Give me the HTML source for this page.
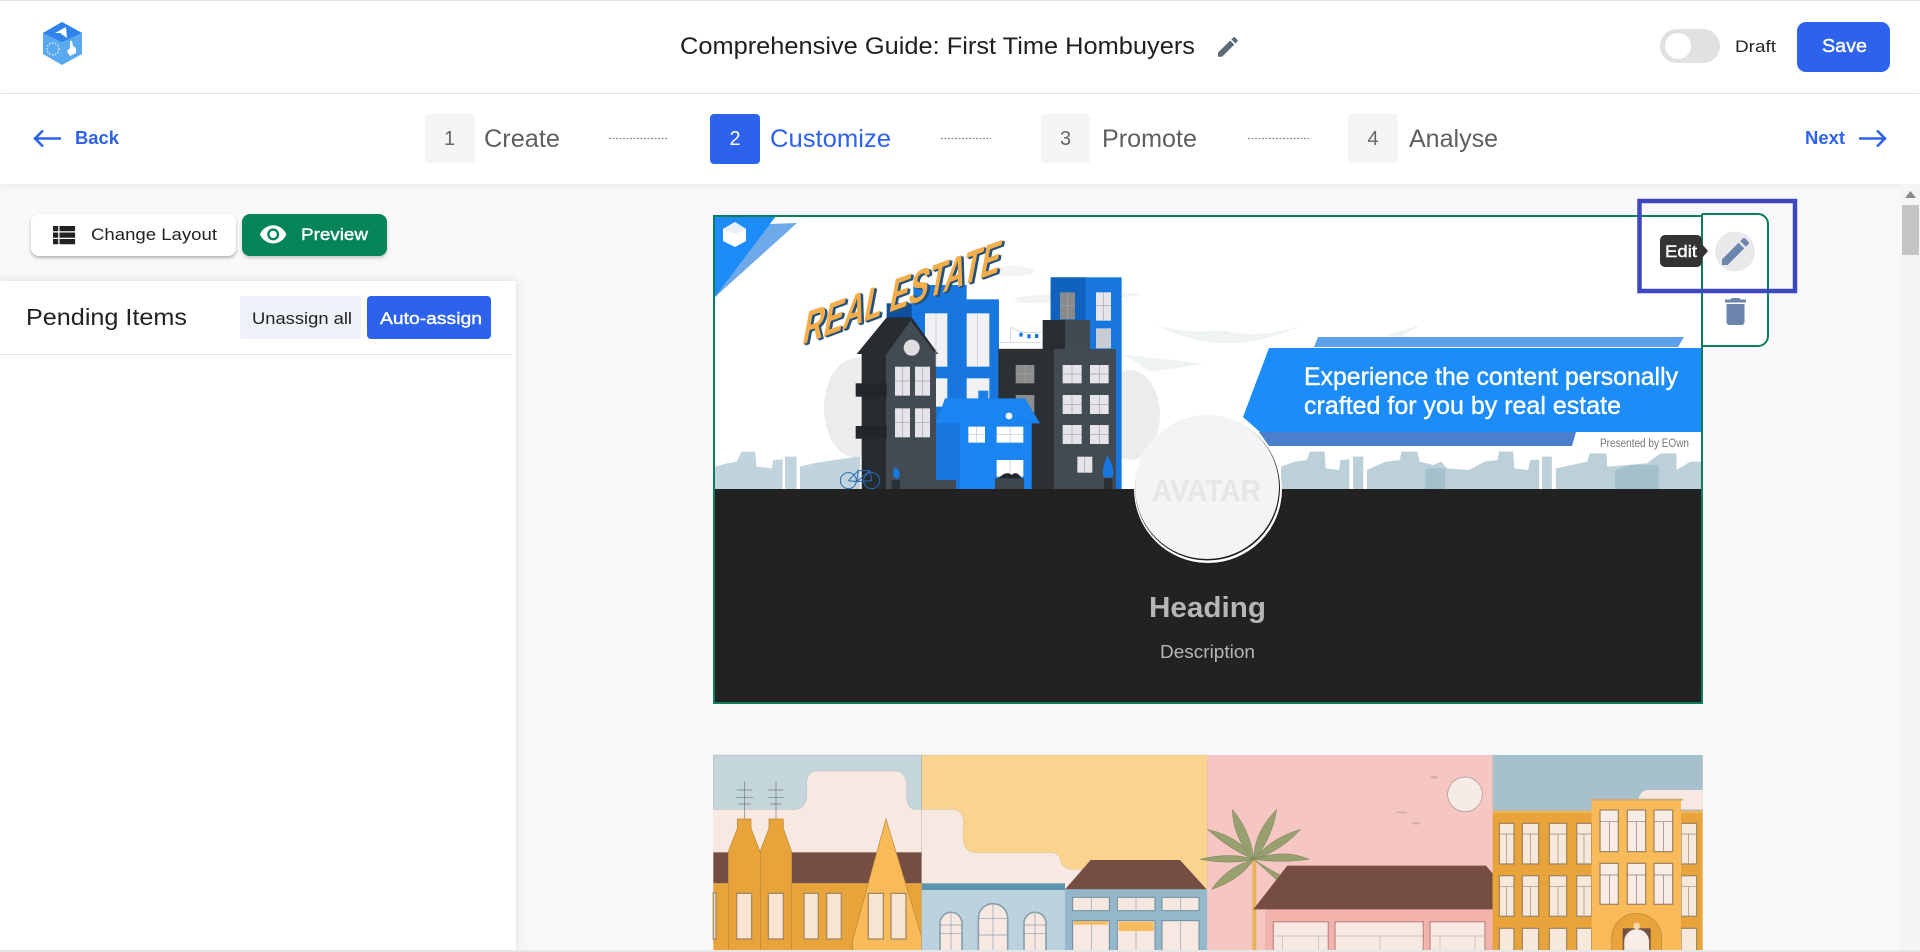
<!DOCTYPE html>
<html lang="en"><head><meta charset="utf-8"><title>Comprehensive Guide</title>
<style>
html,body{margin:0;padding:0;width:1920px;height:952px;overflow:hidden;background:#f8f8fa;font-family:"Liberation Sans",sans-serif}
.a{position:absolute;box-sizing:border-box}
svg{position:absolute;left:0;top:0}
text{font-family:"Liberation Sans",sans-serif}
.m{stroke:#fff;stroke-width:.4px}
</style></head><body>
<div class="a" style="left:0;top:0;width:1920px;height:1px;background:#e2e2e4"></div>
<div class="a" style="left:0;top:1px;width:1920px;height:92px;background:#fff;"></div>
<div class="a" style="left:0;top:93px;width:1920px;height:1px;background:#e3e3e5"></div>
<div class="a" style="left:0;top:94px;width:1920px;height:90px;background:#fff;box-shadow:0 2px 6px rgba(0,0,0,.05)"></div>
<div class="a" style="left:425px;top:114px;width:50px;height:49px;background:#f5f5f6;border-radius:3px"></div>
<div class="a" style="left:710px;top:114px;width:50px;height:50px;background:#2d62ed;border-radius:4px"></div>
<div class="a" style="left:1041px;top:114px;width:49px;height:49px;background:#f5f5f6;border-radius:3px"></div>
<div class="a" style="left:1348px;top:114px;width:50px;height:49px;background:#f5f5f6;border-radius:3px"></div>
<div class="a" style="left:1660px;top:29px;width:60px;height:34px;background:#e1e1e1;border-radius:17px"></div>
<div class="a" style="left:1665px;top:33px;width:26px;height:26px;background:#fff;border-radius:50%"></div>
<div class="a" style="left:1797px;top:22px;width:93px;height:50px;background:#2d62ed;border-radius:9px"></div>
<div class="a" style="left:31px;top:214px;width:205px;height:42px;background:#fff;border-radius:8px;box-shadow:0 2px 3px rgba(0,0,0,.28)"></div>
<div class="a" style="left:242px;top:214px;width:145px;height:42px;background:#048557;border-radius:8px;box-shadow:0 2px 3px rgba(0,0,0,.2)"></div>
<div class="a" style="left:0;top:281px;width:516px;height:671px;background:#fff;box-shadow:0 0 8px rgba(0,0,0,.12)"></div>
<div class="a" style="left:240px;top:296px;width:121px;height:43px;background:#eef1f7;border-radius:3px"></div>
<div class="a" style="left:367px;top:296px;width:124px;height:43px;background:#2d62ed;border-radius:4px"></div>
<div class="a" style="left:0;top:354px;width:512px;height:1px;background:#e3e3e5"></div>
<div class="a" style="left:1901px;top:184px;width:19px;height:768px;background:#f5f5f6"></div>
<div class="a" style="left:1902px;top:205px;width:17px;height:50px;background:#c4c4c4"></div>
<div class="a" style="left:713px;top:215px;width:990px;height:274px;background:#fff"></div>
<div class="a" style="left:713px;top:489px;width:990px;height:215px;background:#222"></div>
<svg width="1920" height="952" viewBox="0 0 1920 952">
<!-- logo -->
<polygon points="62,22 82,33 82,54 62,65 43,54 43,33" fill="#5aa9ee"/>
<polygon points="62,22 82,33 62,42 43,33" fill="#2f83ea"/>
<polygon points="66,27 67,38 60,33 55,33" fill="#fff"/>
<circle cx="53" cy="49" r="6" fill="none" stroke="#cfe6fb" stroke-width="1.500" stroke-dasharray="1.500 1.500"/>
<path d="M70 41h2l1 5 3 2v5l-6 3-3-5 3-3z" fill="#fff"/>
<!-- arrows + pencil -->
<g fill="none" stroke="#2d62ed" stroke-width="2.500"><path d="M35 138.500h26M43 130.500l-8 8 8 8"/><path d="M1859 138.500h26M1877 130.500l8 8-8 8"/></g>
<g fill="#5d6b7a" transform="translate(1214.700,33.700) scale(1.100)"><path d="M3 17.250V21h3.750L17.810 9.940l-3.750-3.750L3 17.250zM20.710 7.040c.39-.39.39-1.020 0-1.410l-2.340-2.340c-.39-.39-1.020-.39-1.410 0l-1.830 1.830 3.750 3.750 1.830-1.830z"/></g>
<g stroke="#8c8c8c" stroke-width="1.200" stroke-dasharray="2 1.500"><path d="M609 138.500h58M941 138.500h50M1248 138.500h61"/></g>
<!-- UI text -->
<text x="680" y="54" font-size="24" fill="#1f1f1f" textLength="515" lengthAdjust="spacingAndGlyphs">Comprehensive Guide: First Time Hombuyers</text>
<text x="1735" y="52" font-size="17" fill="#262626" textLength="41" lengthAdjust="spacingAndGlyphs">Draft</text>
<text class="m" x="1822" y="52" font-size="18" fill="#fff" textLength="45" lengthAdjust="spacingAndGlyphs">Save</text>
<text x="75" y="144" font-size="18" font-weight="700" fill="#2d62ed" textLength="44" lengthAdjust="spacingAndGlyphs">Back</text>
<text x="1805" y="144" font-size="18" font-weight="700" fill="#2d62ed" textLength="40" lengthAdjust="spacingAndGlyphs">Next</text>
<text x="449.500" y="145" font-size="20" fill="#666" text-anchor="middle">1</text>
<text x="735" y="145" font-size="20" fill="#fff" text-anchor="middle">2</text>
<text x="1065.500" y="145" font-size="20" fill="#666" text-anchor="middle">3</text>
<text x="1373" y="145" font-size="20" fill="#666" text-anchor="middle">4</text>
<text x="484" y="147" font-size="25" fill="#5f5f5f" textLength="76" lengthAdjust="spacingAndGlyphs">Create</text>
<text x="770" y="147" font-size="25" fill="#2d62ed" textLength="121" lengthAdjust="spacingAndGlyphs">Customize</text>
<text x="1102" y="147" font-size="25" fill="#5f5f5f" textLength="95" lengthAdjust="spacingAndGlyphs">Promote</text>
<text x="1409" y="147" font-size="25" fill="#5f5f5f" textLength="89" lengthAdjust="spacingAndGlyphs">Analyse</text>
<g fill="#222" transform="translate(47.800,219.500) scale(1.300)"><path d="M4 14h4v-4H4v4zm0 5h4v-4H4v4zM4 9h4V5H4v4zm5 5h12v-4H9v4zm0 5h12v-4H9v4zM9 5v4h12V5H9z"/></g>
<text x="91" y="240" font-size="17" fill="#222" textLength="126" lengthAdjust="spacingAndGlyphs">Change Layout</text>
<g fill="#fff" transform="translate(258.800,220) scale(1.200)"><path d="M12 4.500C7 4.500 2.730 7.610 1 12c1.730 4.390 6 7.500 11 7.500s9.270-3.110 11-7.500c-1.730-4.390-6-7.500-11-7.500zM12 17c-2.760 0-5-2.240-5-5s2.240-5 5-5 5 2.240 5 5-2.240 5-5 5zm0-8c-1.660 0-3 1.340-3 3s1.340 3 3 3 3-1.340 3-3-1.340-3-3-3z"/></g>
<text class="m" x="301" y="240" font-size="17" fill="#fff" textLength="67" lengthAdjust="spacingAndGlyphs">Preview</text>
<text x="26" y="325" font-size="23" fill="#222" textLength="161" lengthAdjust="spacingAndGlyphs">Pending Items</text>
<text x="252" y="324" font-size="17" fill="#222" textLength="100" lengthAdjust="spacingAndGlyphs">Unassign all</text>
<text class="m" x="380" y="324" font-size="17" fill="#fff" textLength="102" lengthAdjust="spacingAndGlyphs">Auto-assign</text>
<polygon points="1905,198 1910.500,191 1916,198" fill="#8a8a8a"/>
<!-- banner background clouds -->
<g fill="#eef4f1"><path d="M1157 325Q1190 335 1222 330Q1260 340 1303 325Q1260 345 1220 343Q1190 342 1157 325z"/><path d="M1123 354L1205 364L1150 372z"/><path d="M1386 335L1421 325L1400 337z"/></g>
<g fill="#f3f3f3"><ellipse cx="1013" cy="271" rx="22" ry="5"/><path d="M1013 298Q1080 288 1143 294L1100 302L1020 303z"/></g>
<g fill="#ececec"><ellipse cx="1130" cy="415" rx="30" ry="45"/><ellipse cx="857" cy="408" rx="33" ry="50"/></g>
<!-- corner -->
<polygon points="715,224 770,224 797,223 715,297" fill="#6ea9ea"/>
<polygon points="715,216 776,216 715,297" fill="#1b8cf8"/>
<polygon points="735,222 746,229 746,241 735,247 723,241 723,229" fill="#fff"/>
<polygon points="735,222 746,229 735,234 723,229" fill="#e6eff9"/>
<!-- buildings, zoom coords -->
<g transform="translate(700,200) scale(.33333)">
<path d="M45 867V800L80 790 110 785 125 755H165L170 800 215 805 220 780 248 778V867H255V770H290V867H300V800L340 790 400 780 480 770V867z" fill="#c1d3dc"/>
<rect x="560" y="310" width="80" height="60" fill="#0e4f9f"/>
<rect x="640" y="255" width="160" height="60" fill="#1877df"/>
<rect x="635" y="298" width="262" height="569" fill="#1877df"/>
<g fill="#f1f0f3"><rect x="675" y="340" width="67" height="160"/><rect x="800" y="340" width="68" height="160"/><rect x="700" y="535" width="42" height="85"/><rect x="800" y="535" width="68" height="65"/></g>
<rect x="1052" y="232" width="213" height="635" fill="#1877df"/>
<rect x="1052" y="232" width="105" height="128" fill="#0f62bd"/>
<rect x="1080" y="277" width="45" height="81" fill="#8a8a8a"/>
<rect x="1188" y="277" width="45" height="85" fill="#e6e6ea"/><rect x="1188" y="385" width="45" height="60" fill="#c9cdd3"/>
<g stroke="#c9c9cc" stroke-width="2" fill="none"><path d="M897 427H1027M897 445H1027M932 382V427M932 382Q970 405 1027 395"/></g>
<g fill="#1877df"><rect x="958" y="398" width="10" height="12"/><rect x="982" y="403" width="10" height="12"/><rect x="1005" y="402" width="10" height="12"/></g>
<rect x="895" y="447" width="170" height="420" fill="#2b3035"/>
<rect x="1028" y="360" width="67" height="90" fill="#282d31"/><rect x="1095" y="360" width="75" height="90" fill="#424a50"/>
<rect x="1062" y="447" width="186" height="420" fill="#424b52"/>
<g fill="#e6e4e8"><rect x="1088" y="495" width="57" height="55"/><rect x="1170" y="495" width="56" height="55"/><rect x="1088" y="585" width="57" height="57"/><rect x="1170" y="585" width="56" height="57"/><rect x="1088" y="675" width="57" height="57"/><rect x="1170" y="675" width="56" height="57"/><rect x="1132" y="770" width="45" height="48"/></g>
<rect x="947" y="495" width="56" height="55" fill="#8d8d8d"/><rect x="947" y="585" width="56" height="55" fill="#8d8d8d"/>
<path d="M1222 767Q1245 800 1238 832H1210Q1205 800 1222 767z" fill="#1877df"/><rect x="1212" y="835" width="25" height="32" fill="#2b3035"/>
<polygon points="470,462 560,352 635,352 715,462" fill="#272c30"/>
<rect x="485" y="462" width="75" height="405" fill="#262b30"/>
<rect x="467" y="550" width="95" height="40" fill="#22262a"/><rect x="467" y="678" width="95" height="38" fill="#22262a"/>
<polygon points="560,462 632,362 708,462" fill="#424b52"/>
<rect x="560" y="462" width="148" height="405" fill="#424b52"/>
<circle cx="635" cy="443" r="24" fill="#dedde0"/>
<g fill="#e6e4e8"><rect x="585" y="500" width="45" height="87"/><rect x="645" y="500" width="45" height="87"/><rect x="585" y="625" width="45" height="87"/><rect x="645" y="625" width="45" height="87"/></g>
<rect x="708" y="840" width="60" height="27" fill="#434b52"/>
<rect x="835" y="572" width="30" height="30" fill="#1a80ea"/>
<polygon points="708,670 735,595 975,595 1020,670" fill="#1a84f0"/>
<rect x="708" y="670" width="287" height="170" fill="#1877df"/>
<rect x="780" y="670" width="215" height="197" fill="#1a84f0"/>
<circle cx="927" cy="648" r="10" fill="#fff"/>
<g fill="#fff"><rect x="805" y="680" width="50" height="48"/><rect x="890" y="680" width="80" height="48"/><rect x="890" y="780" width="80" height="50"/></g>
<g stroke="#9aa6b0" stroke-width="2" fill="none"><path d="M1116 495V550M1088 522H1145M1198 495V550M1170 522H1226M1116 585V642M1088 613H1145M1198 585V642M1170 613H1226M1116 675V732M1088 703H1145M1198 675V732M1170 703H1226M1154 770V818M607 500V587M585 543H630M667 500V587M645 543H690M607 625V712M585 668H630M667 625V712M645 668H690M975 495V550M947 522H1003M1102 277V358M1080 317H1125M1210 277V362M1188 317H1233"/></g>
<g stroke="#b5c5d5" stroke-width="2" fill="none"><path d="M708 340V500M833 340V500M830 680V728M805 704H855M930 680V728M890 704H970M930 780V830"/></g>
<rect x="885" y="835" width="87" height="32" fill="#3d464c"/><path d="M895 835Q920 810 935 825Q950 810 965 835z" fill="#22262a"/>
<g fill="none" stroke="#2a6cb4" stroke-width="3"><circle cx="445" cy="842" r="24"/><circle cx="515" cy="842" r="24"/><path d="M445 842L475 812H510L515 842L470 845L445 842M475 812L470 845L510 812"/></g>
<path d="M585 800Q570 830 592 838Q610 820 585 800z" fill="#1877df"/><rect x="575" y="840" width="25" height="27" fill="#2b3035"/>
</g>
<!-- REAL ESTATE -->
<g transform="matrix(1,-.37,-.19,1,801,345)">
<text x="3" y="2.500" font-size="48" font-weight="700" fill="#24527a" textLength="197" lengthAdjust="spacingAndGlyphs">REAL ESTATE</text>
<text x="1.500" y="1.200" font-size="48" font-weight="700" fill="#24527a" textLength="197" lengthAdjust="spacingAndGlyphs">REAL ESTATE</text>
<text x="0" y="0" font-size="48" font-weight="700" fill="#f3ae4b" textLength="197" lengthAdjust="spacingAndGlyphs">REAL ESTATE</text>
</g>
<!-- right band -->
<polygon points="1314,347 1318,337 1684,337 1678,347" fill="#5ca1e9"/>
<polygon points="1269,348 1701,348 1701,432 1260,432 1243,417" fill="#1b8cf8"/>
<polygon points="1259,432 1576,432 1572,446 1269,446" fill="#4a80cb"/>
<text class="m" x="1304" y="385" font-size="25" fill="#fff" textLength="374" lengthAdjust="spacingAndGlyphs">Experience the content personally</text>
<text class="m" x="1304" y="414" font-size="25" fill="#fff" textLength="317" lengthAdjust="spacingAndGlyphs">crafted for you by real estate</text>
<text x="1600" y="447" font-size="11.500" fill="#777" textLength="89" lengthAdjust="spacingAndGlyphs">Presented by EOwn</text>
<g transform="translate(1200,190) scale(.39541,.33333)">
<path d="M205 897V830L240 815 270 810 278 785H315L318 835 352 840 355 810 378 808V897H387V800H413V897H422V840L470 815 505 810 510 785H550L555 815 590 825 610 815 625 835 680 840 720 815 752 810 756 785H792L795 835 830 840 835 810 858 808V897H865V800H890V897H900V835L980 815 985 790H1028L1030 830 1130 820 1165 790H1205V840L1240 815H1268V897z" fill="#bcd0d9"/>
<path d="M570 897V835H620V897zM1050 897V840L1090 825H1160V897z" fill="#a4c0cc"/>
</g>
<!-- avatar -->
<circle cx="1208" cy="489" r="74" fill="#fff"/>
<circle cx="1207.500" cy="488" r="72.500" fill="#1a1a1a"/>
<circle cx="1207" cy="487" r="72" fill="#f4f4f5"/>
<text x="1206.500" y="501" font-size="31" font-weight="700" fill="#e6e6e7" text-anchor="middle" textLength="109" lengthAdjust="spacingAndGlyphs">AVATAR</text>
<text x="1207.500" y="617" font-size="29" font-weight="700" fill="#b6b6b6" text-anchor="middle" textLength="117" lengthAdjust="spacingAndGlyphs">Heading</text>
<text x="1207.500" y="658" font-size="18" fill="#b6b6b6" text-anchor="middle" textLength="95" lengthAdjust="spacingAndGlyphs">Description</text>
<!-- card border -->
<rect x="714" y="216" width="988" height="487" fill="none" stroke="#0c7d5f" stroke-width="2"/>
<!-- action panel -->
<path d="M1702 214H1758a10 10 0 0 1 10 10V336a10 10 0 0 1-10 10H1702z" fill="#fff"/>
<path d="M1702 214H1758a10 10 0 0 1 10 10V336a10 10 0 0 1-10 10H1702V214" fill="none" stroke="#0c7d5f" stroke-width="2"/>
<rect x="1660" y="235" width="42" height="32" rx="5" fill="#333"/>
<polygon points="1702,244 1708,251 1702,258" fill="#333"/>
<text class="m" x="1665" y="257" font-size="17" fill="#fff" textLength="32" lengthAdjust="spacingAndGlyphs">Edit</text>
<ellipse cx="1735" cy="251.500" rx="20" ry="20" fill="#e9e9ec"/>
<g fill="#6b85ac" transform="translate(1717.500,233.500) scale(1.500)"><path d="M3 17.250V21h3.750L17.810 9.940l-3.750-3.750L3 17.250zM20.710 7.040c.39-.39.39-1.020 0-1.410l-2.340-2.340c-.39-.39-1.020-.39-1.410 0l-1.830 1.830 3.750 3.750 1.830-1.830z"/></g>
<g fill="#6b85ac" transform="translate(1717.500,293.500) scale(1.500)"><path d="M6 19c0 1.100.9 2 2 2h8c1.100 0 2-.9 2-2V7H6v12zM19 4h-3.500l-1-1h-5l-1 1H5v2h14V4z"/></g>
<rect x="1639.500" y="201" width="155.500" height="90" fill="none" stroke="#3d48c0" stroke-width="4.500"/>
<!-- lower image -->
<g transform="translate(700,740) scale(.33333)">
<rect x="40" y="45" width="625" height="590" fill="#f7e8e2"/>
<path d="M40 45H665V208H640Q620 200 620 170V130Q615 93 585 93H350Q320 95 320 125V170Q315 205 290 208H40z" fill="#c5d5dc" stroke="#9aa" stroke-width="1"/>
<rect x="40" y="337" width="625" height="93" fill="#764d42"/>
<rect x="40" y="430" width="625" height="205" fill="#e8a33b"/>
<g stroke="#6f7d80" stroke-width="2" fill="none"><path d="M133 125V237M110 150H157M108 172H160M115 192H152M228 125V237M205 150H250M203 172H253M210 192H245"/></g>
<polygon points="85,335 112,265 112,237 153,237 153,265 180,335 207,265 207,237 250,237 250,265 275,335 275,635 85,635" fill="#e8a33b" stroke="#b98635" stroke-width="2"/>
<path d="M181 335V635" stroke="#b98635" stroke-width="2"/>
<polygon points="558,237 458,600 458,635 665,635 665,590" fill="#f9bb5a" stroke="#b98635" stroke-width="2"/>
<g fill="#f7e4d1" stroke="#a68a62" stroke-width="4"><rect x="40" y="458" width="8" height="139"/><rect x="110" y="460" width="45" height="137"/><rect x="205" y="460" width="45" height="137"/><rect x="312" y="460" width="43" height="137"/><rect x="380" y="460" width="44" height="137"/><rect x="505" y="460" width="45" height="137"/><rect x="573" y="460" width="45" height="137"/></g>
<rect x="665" y="45" width="857" height="590" fill="#f7e8e2"/>
<path d="M665 45H1522V448H1150V388H1110Q1085 385 1080 355Q1075 338 1050 338H825Q795 335 790 305V240Q785 208 755 208H665z" fill="#fad38f" stroke="#bfae8e" stroke-width="1"/>
<rect x="665" y="430" width="430" height="205" fill="#bcd2de"/>
<rect x="665" y="430" width="430" height="20" fill="#5f94b0"/>
<g fill="#f7e8e2" stroke="#8aa0ac" stroke-width="5">
<path d="M720 635V550a33 33 0 0 1 66 0V635z"/><path d="M835 635V535a44 44 0 0 1 88 0V635z"/><path d="M972 635V550a33 33 0 0 1 66 0V635z"/></g>
<g stroke="#8aa0ac" stroke-width="2" fill="none"><path d="M753 520V635M720 580H786M720 555H786M879 490V635M835 535H923M835 585H923M1005 520V635M972 580H1038M972 555H1038M1174 472V512M1308 472V512M1441 472V512M1174 542V635M1308 575V635M1441 542V635"/></g>
<polygon points="1172,360 1440,360 1520,448 1095,448" fill="#764d42"/>
<rect x="1095" y="448" width="427" height="187" fill="#95b7cb"/>
<g fill="#f7e8e2" stroke="#6f8c9c" stroke-width="3"><rect x="1118" y="472" width="110" height="40"/><rect x="1252" y="472" width="113" height="40"/><rect x="1386" y="472" width="111" height="40"/><rect x="1118" y="542" width="110" height="95"/><rect x="1252" y="542" width="113" height="95"/><rect x="1386" y="542" width="111" height="95"/></g>
<rect x="1256" y="545" width="105" height="28" fill="#f5bb5d"/><rect x="1122" y="544" width="102" height="10" fill="#f5bb5d"/>
<g stroke="#8aa0ac" stroke-width="2" fill="none"><path d="M1174 472V512M1308 472V512M1441 472V512M1174 554V635M1308 573V635M1441 545V635"/></g>
<path d="M665 45V630" stroke="#999" stroke-width="1"/>
</g>
<g transform="translate(1200,740) scale(.33333)">
<rect x="22" y="45" width="857" height="590" fill="#f6c6c2"/>
<circle cx="795" cy="163" r="52" fill="#f6ece5" stroke="#a5908c" stroke-width="2"/>
<g fill="#d5aeac"><ellipse cx="702" cy="112" rx="12" ry="5"/><ellipse cx="605" cy="217" rx="18" ry="3"/><ellipse cx="648" cy="250" rx="12" ry="4"/></g>
<rect x="157" y="358" width="12" height="277" fill="#e8b35a"/>
<g fill="#97a06e" stroke="#76805a" stroke-width="1.500"><path d="M162 358Q90 330 22 268Q120 290 162 358z"/><path d="M162 358Q100 300 97 208Q150 270 162 358z"/><path d="M162 358Q160 280 230 208Q215 300 162 358z"/><path d="M162 358Q210 295 302 268Q240 335 162 358z"/><path d="M162 358Q90 335 0 358Q90 375 162 358z"/><path d="M162 358Q250 325 328 358Q240 370 162 358z"/><path d="M162 358Q80 380 35 448Q120 420 162 358z"/><path d="M162 358Q210 390 250 410L230 420z"/></g>
<rect x="195" y="508" width="684" height="127" fill="#f2b3ad"/>
<polygon points="262,377 858,377 878,400 878,508 160,508" fill="#764d42"/>
<g fill="#f6e8e2" stroke="#c98d88" stroke-width="4"><rect x="220" y="545" width="165" height="90"/><rect x="405" y="545" width="265" height="90"/><rect x="690" y="545" width="165" height="90"/></g>
<g stroke="#c9b4ae" stroke-width="2" fill="none"><path d="M222 588H383M407 588H668M692 588H853M248 588V635M355 588V635M540 588V635M720 588V635M825 588V635"/></g>
<rect x="878" y="45" width="630" height="590" fill="#e8a33b"/>
<rect x="878" y="45" width="630" height="167" fill="#a7c0cd"/>
<path d="M1315 178Q1322 150 1345 150H1508V208H1443V178z" fill="#f7e8e2"/>
<rect x="878" y="212" width="630" height="8" fill="#efb455"/>
<g fill="#f7e8dc" stroke="#a68a62" stroke-width="4">
<rect x="898" y="250" width="44" height="122"/><rect x="967" y="250" width="49" height="122"/><rect x="1048" y="250" width="52" height="122"/><rect x="1130" y="250" width="45" height="122"/><rect x="1443" y="250" width="47" height="122"/>
<rect x="898" y="407" width="44" height="122"/><rect x="967" y="407" width="49" height="122"/><rect x="1048" y="407" width="52" height="122"/><rect x="1130" y="407" width="45" height="122"/><rect x="1443" y="407" width="47" height="122"/>
<rect x="898" y="565" width="44" height="70"/><rect x="967" y="565" width="49" height="70"/><rect x="1048" y="565" width="52" height="70"/><rect x="1130" y="565" width="45" height="70"/><rect x="1443" y="565" width="47" height="70"/></g>
<g stroke="#9c8a70" stroke-width="2" fill="none"><path d="M898 282H942M967 282H1016M1048 282H1100M1130 282H1175M1443 282H1490M920 282V372M991 282V372M1074 282V372M1152 282V372M1466 282V372M898 440H942M967 440H1016M1048 440H1100M1130 440H1175M1443 440H1490M920 440V529M991 440V529M1074 440V529M1152 440V529M1466 440V529"/></g>
<rect x="1175" y="180" width="268" height="455" fill="#f9bb5a"/>
<rect x="1168" y="176" width="282" height="6" fill="#c9ad7a"/>
<g fill="#f7ece6" stroke="#a68a62" stroke-width="4">
<rect x="1200" y="210" width="55" height="125"/><rect x="1282" y="210" width="55" height="125"/><rect x="1362" y="210" width="56" height="125"/>
<rect x="1200" y="370" width="55" height="123"/><rect x="1282" y="370" width="55" height="123"/><rect x="1362" y="370" width="56" height="123"/></g>
<g stroke="#8a7a66" stroke-width="2" fill="none"><path d="M1228 245V335M1310 245V335M1390 245V335M1200 245H1255M1282 245H1337M1362 245H1418M1228 405V493M1310 405V493M1390 405V493M1200 405H1255M1282 405H1337M1362 405H1418"/></g>
<path d="M1235 635V595a75 75 0 0 1 150 0V635z" fill="#e8a33b" stroke="#b98635" stroke-width="2"/>
<rect x="1268" y="565" width="84" height="70" fill="#764d42"/>
<path d="M1272 635V605a38 38 0 0 1 76 0V635z" fill="#f7ece6" stroke="#8a7a66" stroke-width="2"/>
<circle cx="1310" cy="558" r="10" fill="#f6d9a8"/>
</g>
</svg>
<div class="a" style="left:0;top:950px;width:1920px;height:2px;background:#e6e6e6"></div>
</body></html>
